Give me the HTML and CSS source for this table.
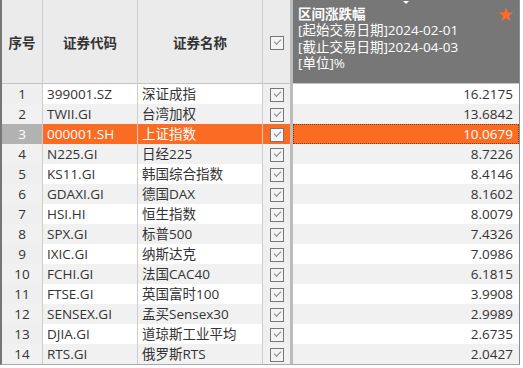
FILE: index.html
```html
<!DOCTYPE html>
<html lang="zh-CN">
<head>
  <meta charset="UTF-8">
  <title>区间涨跌幅</title>
  <link rel="stylesheet" href="styles.css">
</head>
<body>
  <table class="grid">
    <thead>
      <tr>
        <th class="c-no">序号</th>
        <th class="c-code">证券代码</th>
        <th class="c-name">证券名称</th>
        <th class="c-chk"><span class="chk"></span></th>
        <th class="c-val">
          <span class="sort"></span>
          <span class="star">★</span>
          <div class="val-title">区间涨跌幅</div>
          <div>[起始交易日期]2024-02-01</div>
          <div>[截止交易日期]2024-04-03</div>
          <div>[单位]%</div>
        </th>
      </tr>
    </thead>
    <tbody>
      <tr><td class="no">1</td><td>399001.SZ</td><td>深证成指</td><td class="cb"><span class="chk"></span></td><td class="num">16.2175</td></tr>
      <tr><td class="no">2</td><td>TWII.GI</td><td>台湾加权</td><td class="cb"><span class="chk"></span></td><td class="num">13.6842</td></tr>
      <tr class="selected"><td class="no">3</td><td>000001.SH</td><td>上证指数</td><td class="cb"><span class="chk"></span></td><td class="num focus">10.0679</td></tr>
      <tr><td class="no">4</td><td>N225.GI</td><td>日经225</td><td class="cb"><span class="chk"></span></td><td class="num">8.7226</td></tr>
      <tr><td class="no">5</td><td>KS11.GI</td><td>韩国综合指数</td><td class="cb"><span class="chk"></span></td><td class="num">8.4146</td></tr>
      <tr><td class="no">6</td><td>GDAXI.GI</td><td>德国DAX</td><td class="cb"><span class="chk"></span></td><td class="num">8.1602</td></tr>
      <tr><td class="no">7</td><td>HSI.HI</td><td>恒生指数</td><td class="cb"><span class="chk"></span></td><td class="num">8.0079</td></tr>
      <tr><td class="no">8</td><td>SPX.GI</td><td>标普500</td><td class="cb"><span class="chk"></span></td><td class="num">7.4326</td></tr>
      <tr><td class="no">9</td><td>IXIC.GI</td><td>纳斯达克</td><td class="cb"><span class="chk"></span></td><td class="num">7.0986</td></tr>
      <tr><td class="no">10</td><td>FCHI.GI</td><td>法国CAC40</td><td class="cb"><span class="chk"></span></td><td class="num">6.1815</td></tr>
      <tr><td class="no">11</td><td>FTSE.GI</td><td>英国富时100</td><td class="cb"><span class="chk"></span></td><td class="num">3.9908</td></tr>
      <tr><td class="no">12</td><td>SENSEX.GI</td><td>孟买Sensex30</td><td class="cb"><span class="chk"></span></td><td class="num">2.9989</td></tr>
      <tr><td class="no">13</td><td>DJIA.GI</td><td>道琼斯工业平均</td><td class="cb"><span class="chk"></span></td><td class="num">2.6735</td></tr>
      <tr><td class="no">14</td><td>RTS.GI</td><td>俄罗斯RTS</td><td class="cb"><span class="chk"></span></td><td class="num">2.0427</td></tr>
    </tbody>
  </table>
</body>
</html>
```

FILE: styles.css
```css
body {
  margin: 0;
  background: #fff;
  font-family: 'Open Sans', 'Noto Sans CJK SC', sans-serif;
  font-size: 13.5px;
  color: #333;
}

.grid {
  table-layout: fixed;
  border-collapse: separate;
  border-spacing: 0;
  width: 520px;
  border-left: 2px solid #767676;
  border-right: 1px solid #8c8c8c;
  border-bottom: 1px solid #a8a8a8;
}

th, td {
  box-sizing: border-box;
  padding: 0 4px;
  border-right: 1px solid #cdcdcd;
  white-space: nowrap;
  overflow: hidden;
}

/* header */
th {
  height: 84px;
  background: #ebebeb;
  border-bottom: 1px solid #c4c4c4;
  font-weight: bold;
  color: #333;
  text-align: center;
}

.c-no { width: 41px; }
.c-code { width: 95px; }
.c-name { width: 125px; }
.c-chk { width: 30px; }
.c-val { width: 226px; }

.c-chk, .cb {
  border-right: 3px solid #bcbcbc;
  padding: 0;
  text-align: center;
}

.c-val {
  position: relative;
  background: #777;
  color: #fff;
  font-weight: normal;
  text-align: left;
  vertical-align: top;
  padding: 6px 5px 0;
  line-height: 16.3px;
  border-right: none;
}

.val-title {
  font-weight: bold;
}

.star {
  position: absolute;
  top: 3px;
  right: 5px;
  color: #ff6a26;
  font-family: 'DejaVu Sans', sans-serif;
  font-size: 19px;
  line-height: 22px;
}

.sort {
  position: absolute;
  top: 1px;
  left: 110px;
  border-left: 3px solid transparent;
  border-right: 3px solid transparent;
  border-top: 3px solid #fff;
}

/* body rows */
td {
  height: 20px;
  line-height: 20px;
  background: #fff;
}

tbody tr:nth-child(even) td {
  background: #f1f1f1;
}

tbody td.no,
tbody td.cb {
  background: #efefef;
}

td.no {
  text-align: center;
  padding: 0;
}

td.num {
  text-align: right;
  padding-right: 6px;
  border-right: none;
}

tr.selected td,
tbody tr.selected td.cb {
  background: #fa6b24;
  color: #fff;
}

tbody tr.selected td.no {
  background: #b2b2b2;
  color: #fff;
}

td.focus {
  outline: 1px dotted #8a3a10;
  outline-offset: -1px;
}

/* checkbox */
.chk {
  display: inline-block;
  position: relative;
  width: 14px;
  height: 14px;
  box-sizing: border-box;
  border: 1px solid #777;
  background: #f4f4f4;
  vertical-align: middle;
}

.chk::after {
  content: '';
  position: absolute;
  left: 3px;
  top: 2px;
  width: 6px;
  height: 3px;
  border-left: 1px solid #888;
  border-bottom: 1px solid #888;
  transform: rotate(-45deg);
}
```
